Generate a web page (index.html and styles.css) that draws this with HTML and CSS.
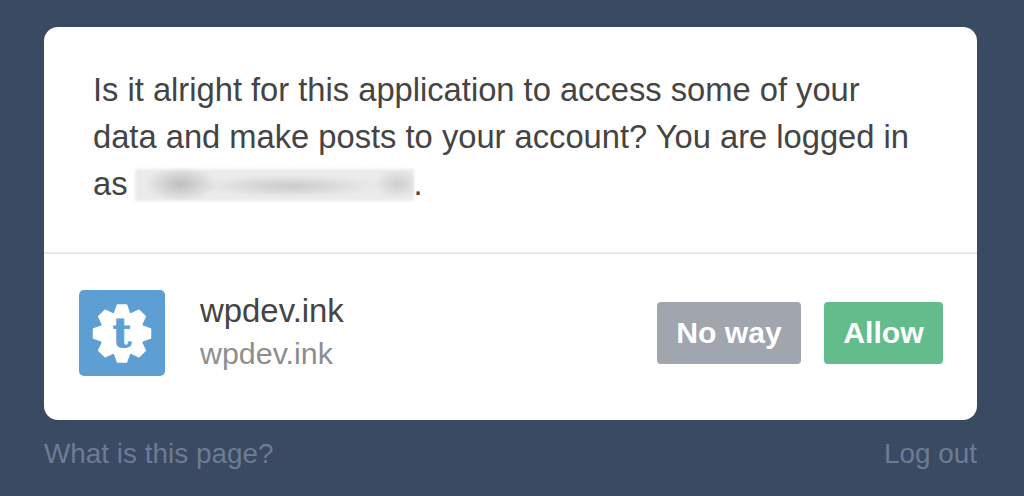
FILE: index.html
```html
<!DOCTYPE html>
<html lang="en">
<head>
<meta charset="utf-8">
<title>Authorize application</title>
<link rel="stylesheet" href="styles.css">
</head>
<body>
<main class="page">
  <section class="card">
    <p class="message">Is it alright for this application to access some of your data and make posts to your account? You are logged in as <span class="redacted"></span>.</p>
    <div class="app-row">
      <svg class="app-icon" viewBox="0 0 86 86" aria-hidden="true">
        <rect class="icon-bg" width="86" height="86" rx="5"/>
        <g class="gear">
          <circle cx="43" cy="43.5" r="21.5"/>
          <polygon points="35,25 38.5,15 47.5,15 51,25"/>
          <polygon points="35,25 38.5,15 47.5,15 51,25" transform="rotate(45 43 43.5)"/>
          <polygon points="35,25 38.5,15 47.5,15 51,25" transform="rotate(90 43 43.5)"/>
          <polygon points="35,25 38.5,15 47.5,15 51,25" transform="rotate(135 43 43.5)"/>
          <polygon points="35,25 38.5,15 47.5,15 51,25" transform="rotate(180 43 43.5)"/>
          <polygon points="35,25 38.5,15 47.5,15 51,25" transform="rotate(225 43 43.5)"/>
          <polygon points="35,25 38.5,15 47.5,15 51,25" transform="rotate(270 43 43.5)"/>
          <polygon points="35,25 38.5,15 47.5,15 51,25" transform="rotate(315 43 43.5)"/>
        </g>
        <text class="icon-t" x="43" y="57" text-anchor="middle">t</text>
      </svg>
      <div class="app-names">
        <div class="app-title">wpdev.ink</div>
        <div class="app-url">wpdev.ink</div>
      </div>
      <div class="actions">
        <button class="btn btn-deny" type="button">No way</button>
        <button class="btn btn-allow" type="button">Allow</button>
      </div>
    </div>
  </section>
  <footer class="links">
    <a href="#">What is this page?</a>
    <a href="#">Log out</a>
  </footer>
</main>
</body>
</html>
```
FILE: styles.css
```css
* { box-sizing: border-box; }
html, body { margin: 0; height: 100%; }
body {
  background: #3a4a63;
  font-family: "Liberation Sans", Arial, sans-serif;
  overflow: hidden;
}
.page { padding: 27px 47px 0 44px; }
.card {
  background: #fff;
  border-radius: 14px;
  height: 393px;
}
.message {
  margin: 0;
  padding: 39px 49px 0;
  font-size: 32.7px;
  line-height: 47px;
  color: #444;
  border-bottom: 2px solid #e6e7e9;
  box-sizing: content-box;
  height: 186px;
}
.redacted {
  display: inline-block;
  width: 279px;
  height: 32px;
  margin-left: -2px;
  vertical-align: -6px;
  background:
    radial-gradient(ellipse 36px 18px at 46px 15px, #bdbdbd, transparent),
    radial-gradient(ellipse 90px 11px at 155px 17px, #c9c9c9, transparent),
    radial-gradient(ellipse 24px 15px at 262px 15px, #cdcdcd, transparent),
    #ebebeb;
  filter: blur(1.5px);
}
.app-row {
  display: flex;
  align-items: center;
  padding: 36px 34px 0 35px;
}
.app-icon { width: 86px; height: 86px; flex: none; }
.icon-bg { fill: #5d9fd3; }
.gear { fill: #fff; stroke: #fff; stroke-width: 1.5; stroke-linejoin: round; }
.icon-t {
  fill: #5d9fd3;
  stroke: #5d9fd3;
  stroke-width: 0.8;
  font-family: "DejaVu Serif", serif;
  font-weight: 700;
  font-size: 41px;
}
.app-names { margin-left: 35px; flex: 1; }
.app-title { font-size: 32.9px; line-height: 41px; color: #444; }
.app-url { font-size: 30.4px; line-height: 45px; color: #8e8e8e; }
.actions { display: flex; gap: 23px; }
.btn {
  height: 62px;
  border: 0;
  border-radius: 4px;
  color: #fff;
  font-family: inherit;
  font-size: 30.2px;
  font-weight: 700;
  padding: 0;
}
.btn-deny { width: 144px; background: #a0a5ae; }
.btn-allow { width: 119px; background: #62bc8b; }
.links {
  display: flex;
  justify-content: space-between;
  margin-top: 14px;
  font-size: 27.9px;
  line-height: 40px;
}
.links a { color: #6d7c94; text-decoration: none; }
```
